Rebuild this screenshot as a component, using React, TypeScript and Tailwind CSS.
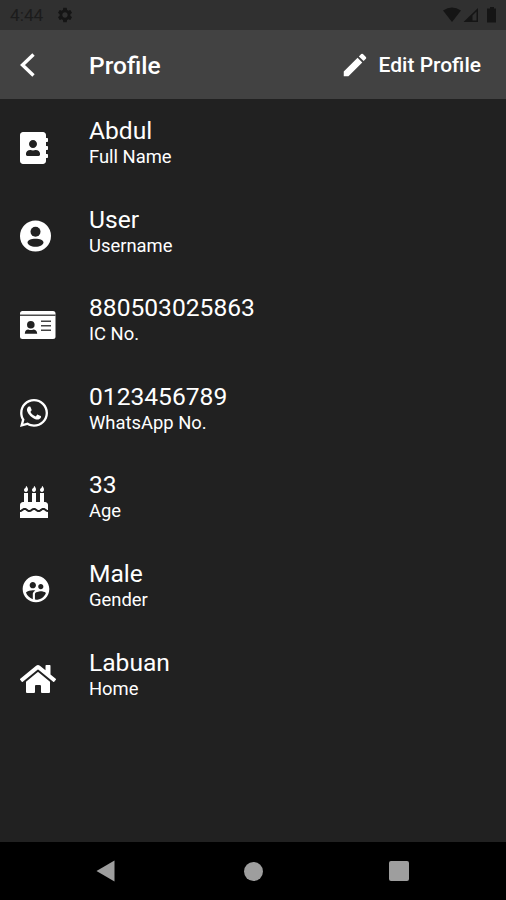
import type { ReactNode } from "react";
import { FaAddressBook, FaBirthdayCake, FaHome, FaWhatsapp } from "react-icons/fa";
import { MdEdit, MdSettings, MdSupervisedUserCircle } from "react-icons/md";

interface ProfileRowProps {
  icon: ReactNode;
  value: string;
  label: string;
}

function UserIcon() {
  return (
    <svg width="31" height="32" viewBox="0 0 31 32" fill="currentColor">
      <circle cx="15.5" cy="16" r="15.5" />
      <g className="fill-[#212121]">
        <circle cx="15.500" cy="11.800" r="5" />
        <path d="M7.500 22.500C7.500 20.300 11 18.800 15.500 18.800s8 1.500 8 3.700-3.500 4.300-8 4.300-8-2.100-8-4.300z" />
      </g>
    </svg>
  );
}

function IdCardIcon() {
  return (
    <svg width="36" height="32" viewBox="0 0 36 32" fill="currentColor">
      <rect y="2" width="35.500" height="28" rx="2.500" />
      <g className="fill-[#212121]">
        <path d="M0 5.500h35.500v1.500H0z" opacity=".8" />
        <circle cx="10.800" cy="15.800" r="3.800" />
        <path d="M4.800 24.700c0-3 1.700-4.200 3.400-4.200 1.700.8 3.500.8 5.200 0 1.700 0 3.800 1.200 3.800 4.200z" />
        <path d="M21 11.500h10v1.500H21zM21 16h10v1.500H21zM21 20.500h10V22H21z" opacity=".85" />
      </g>
    </svg>
  );
}

function ProfileRow({ icon, value, label }: ProfileRowProps) {
  return (
    <li className="flex h-[88.6px] items-start">
      <div className="mt-[32.5px] flex h-8 w-[89px] shrink-0 items-center pl-5">{icon}</div>
      <div className="pt-[17px]">
        <p className="h-[30px] whitespace-nowrap text-[24.6px] leading-[30px]">{value}</p>
        <p className="h-[22px] whitespace-nowrap text-[18.4px] leading-[22px]">{label}</p>
      </div>
    </li>
  );
}

function StatusBar() {
  return (
    <div className="flex h-[30px] items-center justify-between bg-[#303030] pl-[10px] pr-[8px] text-[#151515]">
      <div className="flex items-center gap-[13px]">
        <span className="text-[17.300px] leading-[30px] text-[#1c1c1c]">4:44</span>
        <MdSettings className="size-[18px]" />
      </div>
      <svg width="55" height="18" viewBox="0 0 55 18" fill="currentColor">
        <path d="M0 4.500Q9-1.500 18 4.500L9 16Z" />
        <path d="M20.500 16 35 2v14zM29.500 9.500V14.500H33.500V5.500z" fillRule="evenodd" />
        <path d="M45 2.500h2V1h4v1.500h2V16.500h-9V2.500z" />
      </svg>
    </div>
  );
}

function Header() {
  return (
    <header className="flex h-[69px] shrink-0 items-center bg-[#424242]">
      <button className="flex w-[89px] shrink-0 pl-5" aria-label="Back">
        <svg width="16" height="24" viewBox="0 0 16 24" fill="none" stroke="currentColor" strokeWidth="3.400">
          <path d="M13.500 1.500 2.500 12 13.500 22.500" />
        </svg>
      </button>
      <h1 className="pt-[2px] text-[24.5px] font-medium leading-[30px]">Profile</h1>
      <button className="ml-auto mr-[25px] flex items-center gap-[9px] text-[21px] font-medium">
        <MdEdit className="size-[30px]" />
        <span className="pt-[2px]">Edit Profile</span>
      </button>
    </header>
  );
}

function NavBar() {
  return (
    <nav className="flex h-[58px] shrink-0 items-center bg-black pl-[96px] text-[#9e9e9e]">
      <svg width="19" height="22" viewBox="0 0 19 22" fill="currentColor">
        <path d="M0.500 11 18.500 0.500v21z" />
      </svg>
      <span className="ml-[129px] size-[19px] rounded-full bg-current" />
      <span className="ml-[126px] size-[20px] rounded-[2px] bg-current" />
    </nav>
  );
}

export default function App() {
  return (
    <div className="flex h-[900px] w-[506px] flex-col overflow-hidden bg-[#212121] font-[Roboto,sans-serif] text-white">
      <StatusBar />
      <Header />
      <ul className="flex-1">
        <ProfileRow icon={<FaAddressBook className="h-8 w-7" />} value="Abdul" label="Full Name" />
        <ProfileRow icon={<UserIcon />} value="User" label="Username" />
        <ProfileRow icon={<IdCardIcon />} value="880503025863" label="IC No." />
        <ProfileRow icon={<FaWhatsapp className="h-8 w-7" />} value="0123456789" label="WhatsApp No." />
        <ProfileRow icon={<FaBirthdayCake className="h-8 w-7" />} value="33" label="Age" />
        <ProfileRow icon={<MdSupervisedUserCircle className="-mt-0.5 size-8" />} value="Male" label="Gender" />
        <ProfileRow icon={<FaHome className="h-8 w-9" />} value="Labuan" label="Home" />
      </ul>
      <NavBar />
    </div>
  );
}
